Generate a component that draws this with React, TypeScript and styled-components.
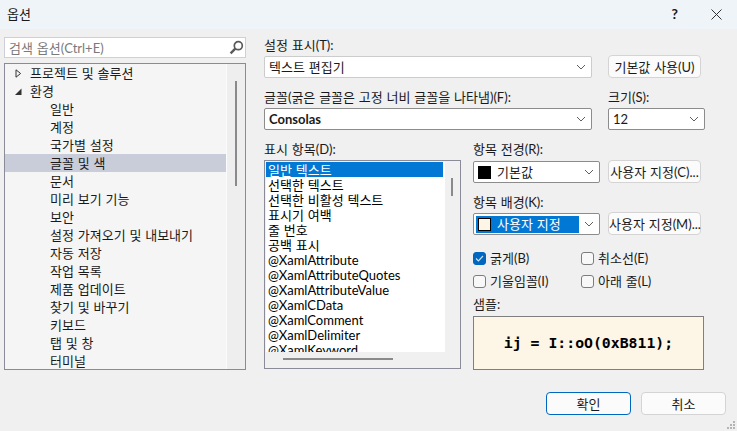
import React from 'react';
import styled, { createGlobalStyle } from 'styled-components';

const UI_FONT = `Lato, "Noto Sans CJK KR", sans-serif`;

const GlobalStyle = createGlobalStyle`
  html, body {
    margin: 0;
    padding: 0;
    background: #f0f0f0;
  }
`;

const Window = styled.div`
  width: 737px;
  height: 431px;
  position: relative;
  overflow: hidden;
  background: #f0f0f0;
  color: #1a1a1a;
  font-family: ${UI_FONT};
  font-size: 13px;
  line-height: 16px;
  word-spacing: 0.5px;
`;

const TitleBar = styled.div`
  height: 29px;
  display: flex;
  align-items: center;
  padding: 0 15px 1px 7px;
  box-sizing: border-box;
  background: #eff4f9;
  gap: 33px;
`;

const Title = styled.div`
  flex: 1;
`;

const HelpMark = styled.span`
  font-size: 14px;
  font-weight: 700;
`;

const Body = styled.div`
  display: flex;
  padding: 8px 0 0 4px;
  height: 333px;
`;

const Side = styled.div`
  width: 242px;
  display: flex;
  flex-direction: column;
  gap: 5px;
`;

const SearchBox = styled.div`
  height: 21px;
  box-sizing: border-box;
  border: 1px solid #cfcfd8;
  background: #fff;
  display: flex;
  align-items: center;
  justify-content: space-between;
  padding: 0 1px 0 4px;
  color: #7a7a7a;
`;

const Tree = styled.div`
  height: 307px;
  box-sizing: border-box;
  border: 1px solid #8a8a98;
  background: #f5f5f5;
  display: flex;
  overflow: hidden;
`;

const TreeRows = styled.div`
  width: 221px;
  display: flex;
  flex-direction: column;
`;

const TreeRow = styled.div<{ $level: number; $selected?: boolean }>`
  height: 18px;
  flex: none;
  display: flex;
  align-items: center;
  white-space: nowrap;
  padding-left: ${(p) => (p.$level === 1 ? 25 : 45)}px;
  background: ${(p) => (p.$selected ? '#c9ccd9' : 'transparent')};
  position: relative;
`;

const Expander = styled.svg`
  position: absolute;
  left: 10px;
  top: 5px;
`;

const TreeScroll = styled.div`
  flex: 1;
  background: #eeeeee;
  border-left: 1px solid #fbfbfb;
  display: flex;
  justify-content: center;
  padding-top: 17px;
`;

const ScrollThumbV = styled.div<{ $h: number }>`
  width: 2px;
  height: ${(p) => p.$h}px;
  background: #8a8a8a;
`;

const Main = styled.div`
  margin-left: 18px;
  width: 441px;
  display: flex;
  flex-direction: column;
`;

const Row = styled.div`
  display: flex;
  gap: 16px;
`;

const Field = styled.div<{ $top: number }>`
  display: flex;
  flex-direction: column;
  margin-top: ${(p) => p.$top}px;
`;

const Label = styled.label<{ $gap?: number }>`
  display: block;
  height: 16px;
  margin-bottom: ${(p) => p.$gap ?? 3}px;
  white-space: nowrap;
`;

const Select = styled.div<{ $w: number; $strong?: boolean; $weight?: number }>`
  width: ${(p) => p.$w}px;
  height: 22px;
  box-sizing: border-box;
  border: 1px solid ${(p) => (p.$strong ? '#8c8c8c' : '#cccccc')};
  border-radius: 2px;
  background: #fff;
  display: flex;
  align-items: center;
  padding: 0 5px 0 4px;
  font-weight: ${(p) => p.$weight ?? 400};
  flex: none;
`;

const SelectText = styled.span`
  flex: 1;
  white-space: nowrap;
`;

const ColorValue = styled.span<{ $active?: boolean }>`
  flex: 1;
  height: 17px;
  margin: 0 5px 0 -2px;
  padding-left: 2px;
  display: flex;
  align-items: center;
  gap: 6px;
  white-space: nowrap;
  background: ${(p) => (p.$active ? '#0078d4' : 'transparent')};
  color: ${(p) => (p.$active ? '#fff' : 'inherit')};
`;

const Swatch = styled.span<{ $fill: string }>`
  width: 13px;
  height: 13px;
  box-sizing: border-box;
  border: 1px solid #000;
  background: ${(p) => p.$fill};
  flex: none;
`;

const Button = styled.button<{ $w: number; $primary?: boolean }>`
  width: ${(p) => p.$w}px;
  height: 23px;
  box-sizing: border-box;
  padding: 0;
  border: 1px solid ${(p) => (p.$primary ? '#0067c0' : '#d4d4d4')};
  border-radius: 4px;
  background: #fbfbfb;
  color: #1a1a1a;
  font: inherit;
  word-spacing: inherit;
  white-space: nowrap;
  flex: none;
`;

const Lower = styled.div`
  display: flex;
  gap: 12px;
  margin-top: 11px;
`;

const ListFrame = styled.div`
  width: 197px;
  height: 209px;
  box-sizing: border-box;
  border: 1px solid #8a8a98;
  background: #f0f0f0;
  display: grid;
  grid-template-columns: 179px 1fr;
  grid-template-rows: 190px 1fr;
  padding: 1px;
  margin-top: 1px;
`;

const ListRows = styled.div`
  background: #fff;
  overflow: hidden;
`;

const ListRow = styled.div<{ $selected?: boolean }>`
  height: 15px;
  line-height: 17px;
  width: 177px;
  padding-left: 2px;
  box-sizing: border-box;
  white-space: nowrap;
  background: ${(p) => (p.$selected ? '#0078d4' : 'transparent')};
  color: ${(p) => (p.$selected ? '#fff' : '#000')};
`;

const ListScrollV = styled.div`
  display: flex;
  justify-content: center;
  padding-top: 16px;
`;

const ListScrollH = styled.div`
  grid-column: 1 / -1;
  padding: 6px 0 0 17px;
`;

const ScrollThumbH = styled.div`
  width: 110px;
  height: 2px;
  background: #8a8a8a;
`;

const Options = styled.div`
  width: 232px;
  display: flex;
  flex-direction: column;
`;

const ColorRow = styled.div`
  display: flex;
  gap: 8px;
  align-items: flex-start;
`;

const ForeRow = styled(ColorRow)`
  margin-bottom: 11px;
`;

const BackLabel = styled(Label)`
  margin-bottom: 3px;
`;

const ColorButton = styled(Button)`
  margin-top: -1px;
`;

const Checks = styled.div`
  display: grid;
  grid-template-columns: 108px 1fr;
  row-gap: 7px;
  margin-top: 15px;
`;

const CheckItem = styled.div`
  display: flex;
  align-items: center;
  gap: 4px;
  height: 16px;
  white-space: nowrap;
`;

const CheckBox = styled.span<{ $on?: boolean }>`
  width: 13px;
  height: 13px;
  box-sizing: border-box;
  border: 1px solid ${(p) => (p.$on ? '#0067c0' : '#7d7d7d')};
  border-radius: 3px;
  background: ${(p) => (p.$on ? '#0067c0' : '#f8f8f8')};
  display: flex;
  align-items: center;
  justify-content: center;
`;

const Sample = styled.div`
  width: 231px;
  height: 54px;
  box-sizing: border-box;
  border: 1px solid #7f7f7f;
  background: #fdf5e6;
  display: flex;
  align-items: center;
  justify-content: center;
  font-family: "DejaVu Sans Mono", monospace;
  font-weight: 700;
  font-size: 14.8px;
  word-spacing: 0;
  color: #000;
`;

const Footer = styled.div`
  display: flex;
  justify-content: flex-end;
  gap: 10px;
  padding: 22px 11px 0 0;
`;

const Grip = styled.svg`
  position: absolute;
  right: 1px;
  bottom: 1px;
`;

const Chevron = () => (
  <svg width="10" height="6" viewBox="0 0 10 6" fill="none">
    <path d="M1 1l4 4 4-4" stroke="#5f5f5f" strokeWidth="1" />
  </svg>
);

const Tick = () => (
  <svg width="9" height="7" viewBox="0 0 9 7" fill="none">
    <path d="M1 3.5l2.4 2.4L8 1" stroke="#cfe4f7" strokeWidth="1.1" />
  </svg>
);

const treeItems = [
  '일반', '계정', '국가별 설정', '글꼴 및 색', '문서', '미리 보기 기능', '보안',
  '설정 가져오기 및 내보내기', '자동 저장', '작업 목록', '제품 업데이트',
  '찾기 및 바꾸기', '키보드', '탭 및 창', '터미널',
];

const listItems = [
  '일반 텍스트', '선택한 텍스트', '선택한 비활성 텍스트', '표시기 여백', '줄 번호', '공백 표시',
  '@XamlAttribute', '@XamlAttributeQuotes', '@XamlAttributeValue', '@XamlCData',
  '@XamlComment', '@XamlDelimiter', '@XamlKeyword',
];

const App = () => (
  <Window>
    <GlobalStyle />
    <TitleBar>
      <Title>옵션</Title>
      <HelpMark>?</HelpMark>
      <svg width="11" height="11" viewBox="0 0 11 11" fill="none">
        <path d="M.5.5l10 10M10.5.5l-10 10" stroke="#333" strokeWidth="1" />
      </svg>
    </TitleBar>
    <Body>
      <Side>
        <SearchBox>
          <span>검색 옵션(Ctrl+E)</span>
          <svg width="15" height="15" viewBox="0 0 15 15" fill="none">
            <circle cx="9.3" cy="5.7" r="4" stroke="#5a5a5a" strokeWidth="1.7" />
            <path d="M6.3 8.7L1.6 13.4" stroke="#5a5a5a" strokeWidth="2.4" />
          </svg>
        </SearchBox>
        <Tree>
          <TreeRows>
            <TreeRow $level={1}>
              <Expander width="7" height="9" viewBox="0 0 7 9" fill="none">
                <path d="M1 .8v7.4L5.6 4.5z" stroke="#333" strokeWidth="1" />
              </Expander>
              프로젝트 및 솔루션
            </TreeRow>
            <TreeRow $level={1}>
              <Expander width="7" height="9" viewBox="0 0 7 9">
                <path d="M0 8h6.5V1.5z" fill="#333" />
              </Expander>
              환경
            </TreeRow>
            {treeItems.map((t) => (
              <TreeRow key={t} $level={2} $selected={t === '글꼴 및 색'}>{t}</TreeRow>
            ))}
          </TreeRows>
          <TreeScroll>
            <ScrollThumbV $h={105} />
          </TreeScroll>
        </Tree>
      </Side>
      <Main>
        <Label>설정 표시(T):</Label>
        <Row>
          <Select $w={328}>
            <SelectText>텍스트 편집기</SelectText>
            <Chevron />
          </Select>
          <ColorButton $w={93}>기본값 사용(U)</ColorButton>
        </Row>
        <Field $top={11}>
          <Row>
            <div>
              <Label>글꼴(굵은 글꼴은 고정 너비 글꼴을 나타냄)(F):</Label>
              <Select $w={328} $strong $weight={700}>
                <SelectText>Consolas</SelectText>
                <Chevron />
              </Select>
            </div>
            <div>
              <Label>크기(S):</Label>
              <Select $w={97} $strong>
                <SelectText>12</SelectText>
                <Chevron />
              </Select>
            </div>
          </Row>
        </Field>
        <Lower>
          <div>
            <Label $gap={3}>표시 항목(D):</Label>
            <ListFrame>
              <ListRows>
                {listItems.map((t, i) => (
                  <ListRow key={t} $selected={i === 0}>{t}</ListRow>
                ))}
              </ListRows>
              <ListScrollV>
                <ScrollThumbV $h={18} />
              </ListScrollV>
              <ListScrollH>
                <ScrollThumbH />
              </ListScrollH>
            </ListFrame>
          </div>
          <Options>
            <Label $gap={4}>항목 전경(R):</Label>
            <ForeRow>
              <Select $w={127} $strong>
                <ColorValue>
                  <Swatch $fill="#000" />
                  기본값
                </ColorValue>
                <Chevron />
              </Select>
              <ColorButton $w={93}>사용자 지정(C)...</ColorButton>
            </ForeRow>
            <BackLabel>항목 배경(K):</BackLabel>
            <ColorRow>
              <Select $w={127} $strong>
                <ColorValue $active>
                  <Swatch $fill="#fdf5e6" />
                  사용자 지정
                </ColorValue>
                <Chevron />
              </Select>
              <ColorButton $w={93}>사용자 지정(M)...</ColorButton>
            </ColorRow>
            <Checks>
              <CheckItem>
                <CheckBox $on><Tick /></CheckBox>
                굵게(B)
              </CheckItem>
              <CheckItem>
                <CheckBox />
                취소선(E)
              </CheckItem>
              <CheckItem>
                <CheckBox />
                기울임꼴(I)
              </CheckItem>
              <CheckItem>
                <CheckBox />
                아래 줄(L)
              </CheckItem>
            </Checks>
            <Field $top={7}>
              <Label $gap={4}>샘플:</Label>
              <Sample>ij = I::oO(0xB811);</Sample>
            </Field>
          </Options>
        </Lower>
      </Main>
    </Body>
    <Footer>
      <Button $w={85} $primary>확인</Button>
      <Button $w={85}>취소</Button>
    </Footer>
    <Grip width="10" height="10" viewBox="0 0 10 10" fill="#b5b5b5">
      <rect x="7" y="1" width="2" height="2" />
      <rect x="4" y="4" width="2" height="2" />
      <rect x="7" y="4" width="2" height="2" />
      <rect x="1" y="7" width="2" height="2" />
      <rect x="4" y="7" width="2" height="2" />
      <rect x="7" y="7" width="2" height="2" />
    </Grip>
  </Window>
);

export default App;
